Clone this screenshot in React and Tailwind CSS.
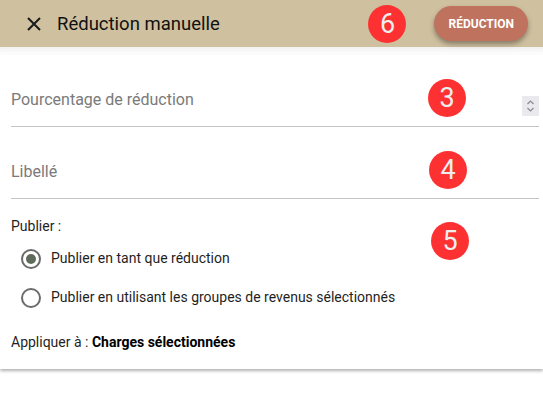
import React, { useState } from 'react';

const Badge = ({ n, className = '' }) => (
  <div className={`flex h-[38px] w-[38px] items-center justify-center rounded-full bg-[#fd3131] text-[27px] leading-none text-[#eeeeee] ${className}`}>
    {n}
  </div>
);

const Radio = ({ checked, label, onClick }) => (
  <div className="flex h-[39px] items-center gap-[10px] pl-[21px]" onClick={onClick}>
    <span className="flex h-[20px] w-[20px] items-center justify-center rounded-full border-2 border-[#6b6b6b]">
      {checked && <span className="h-[10px] w-[10px] rounded-full bg-[#5e6b58]" />}
    </span>
    <span className="text-[14px] text-[#1f1f1f]">{label}</span>
  </div>
);

export default function App() {
  const [mode, setMode] = useState(0);

  return (
    <div className="h-[418px] w-[543px] bg-white" style={{ fontFamily: 'Roboto, "Liberation Sans", sans-serif' }}>
      {/* Toolbar */}
      <div className="flex h-[47px] items-center bg-[#cfc09f] pl-[26px] pr-[15px]">
        <svg width="16" height="16" viewBox="0 0 16 16" className="shrink-0 mt-[1px]">
          <path d="M2 2 L14 14 M14 2 L2 14" stroke="#1a1a1a" strokeWidth="2" />
        </svg>
        <span className="ml-[15px] pt-[3px] text-[18.5px] text-[#111]">Réduction manuelle</span>
        <Badge n="6" className="ml-auto mr-[26px] mt-[1px]" />
        <button className="ml-[2px] h-[35px] rounded-full bg-[#bf735e] px-[14px] text-[12px] font-bold text-white shadow-[0_3px_5px_rgba(0,0,0,0.35)]">
          RÉDUCTION
        </button>
      </div>

      {/* Card */}
      <div className="h-[8px] bg-gradient-to-b from-[#f1f1f1] to-white" />
      <div className="pb-[16px] shadow-[0_2px_3px_rgba(0,0,0,0.3)]">
        <div className="pl-[11px] pr-[4px]">
          <div className="flex h-[72px] items-end border-b border-[#c4c4c4] pb-[14px]">
            <span className="text-[16px] text-[#7a7a7a]">Pourcentage de réduction</span>
            <Badge n="3" className="ml-auto mb-[-5px] mr-[56px]" />
            <div className="mb-[-4px] flex h-[20px] w-[17px] flex-col items-center justify-center bg-[#e9e9ee]">
              <svg width="9" height="14" viewBox="0 0 9 14">
                <path d="M1.5 5 L4.5 2 L7.5 5 M1.5 9 L4.5 12 L7.5 9" stroke="#8a8a90" strokeWidth="1.2" fill="none" />
              </svg>
            </div>
          </div>
          <div className="flex h-[72px] items-end border-b border-[#c4c4c4] pb-[14px]">
            <span className="text-[16px] text-[#7a7a7a]">Libellé</span>
            <Badge n="4" className="ml-auto mb-[-5px] mr-[72px]" />
          </div>
        </div>

        <div className="relative pt-[17px]">
          <div className="pl-[11px] text-[14px] text-[#1f1f1f]">Publier :</div>
          <Badge n="5" className="absolute left-[431px] top-[23px]" />
          <div className="mt-[2px]">
            <Radio checked={mode === 0} label="Publier en tant que réduction" onClick={() => setMode(0)} />
            <Radio checked={mode === 1} label="Publier en utilisant les groupes de revenus sélectionnés" onClick={() => setMode(1)} />
          </div>
          <div className="mt-[15px] pl-[11px] text-[14px] text-[#1f1f1f]">
            Appliquer à : <span className="font-bold text-black">Charges sélectionnées</span>
          </div>
        </div>
      </div>
    </div>
  );
}
